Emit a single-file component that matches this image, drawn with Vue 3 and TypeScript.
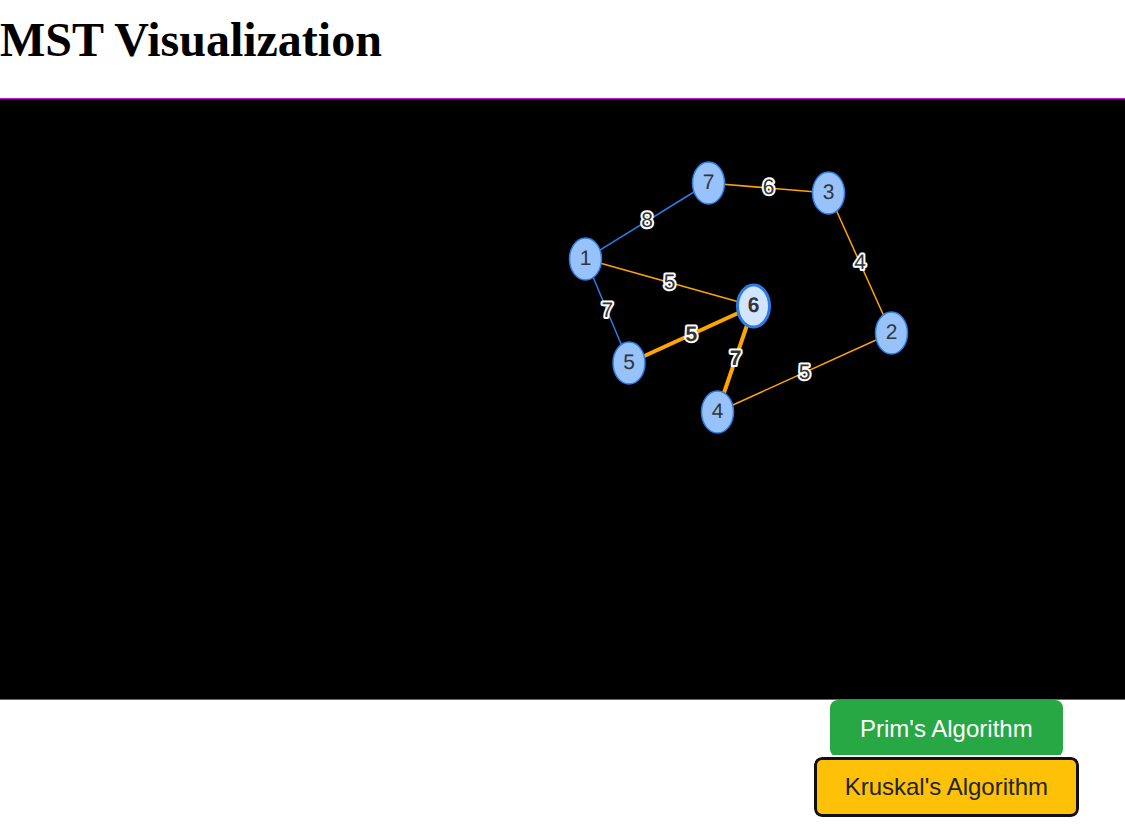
<script setup lang="ts">
import { computed, ref } from 'vue'

interface GraphNode { id: number; x: number; y: number }
interface Edge { from: number; to: number; weight: number; inTree: boolean; active?: boolean }

const nodes: GraphNode[] = [
  { id: 1, x: 585.5, y: 160 },
  { id: 2, x: 891.5, y: 234 },
  { id: 3, x: 828.5, y: 94 },
  { id: 4, x: 717.5, y: 313 },
  { id: 5, x: 629, y: 264 },
  { id: 6, x: 753.5, y: 207 },
  { id: 7, x: 708.5, y: 84 },
]

const edges: Edge[] = [
  { from: 1, to: 7, weight: 8, inTree: false },
  { from: 7, to: 3, weight: 6, inTree: true },
  { from: 3, to: 2, weight: 4, inTree: true },
  { from: 1, to: 6, weight: 5, inTree: true },
  { from: 1, to: 5, weight: 7, inTree: false },
  { from: 5, to: 6, weight: 5, inTree: true, active: true },
  { from: 6, to: 4, weight: 7, inTree: true, active: true },
  { from: 4, to: 2, weight: 5, inTree: true },
]

const selected = ref(6)

const lines = computed(() =>
  edges.map((edge) => {
    const a = nodes.find((n) => n.id === edge.from)!
    const b = nodes.find((n) => n.id === edge.to)!
    return { ...edge, a, b, mx: (a.x + b.x) / 2, my: (a.y + b.y) / 2 }
  }),
)
</script>

<template>
  <main class="page">
    <h1 class="title">MST Visualization</h1>
    <div class="network">
      <svg class="canvas" role="img" aria-label="Weighted graph">
        <g v-for="l in lines" :key="`${l.from}-${l.to}`">
          <line
            class="edge"
            :class="{ tree: l.inTree, active: l.active }"
            :x1="l.a.x" :y1="l.a.y" :x2="l.b.x" :y2="l.b.y"
          />
          <text class="weight" :class="{ strong: l.active }" :x="l.mx" :y="l.my + 6">{{ l.weight }}</text>
        </g>
        <g v-for="n in nodes" :key="n.id" class="node" :class="{ selected: n.id === selected }" @click="selected = n.id">
          <ellipse :cx="n.x" :cy="n.y" rx="16" ry="21" />
          <text :x="n.x" :y="n.y + 6">{{ n.id }}</text>
        </g>
      </svg>
    </div>
    <div class="actions">
      <button type="button" class="btn prim">Prim's Algorithm</button>
      <button type="button" class="btn kruskal">Kruskal's Algorithm</button>
    </div>
  </main>
</template>

<style>
body {
  margin: 0;
  background: #fff;
}
</style>

<style scoped>
.title {
  margin: 0;
  padding: 12px 0 30px;
  font: bold 48px/56px "Liberation Serif", "Times New Roman", serif;
  color: #000;
}
.network {
  border-top: 1px solid #dc0ce6;
  border-bottom: 1px solid #d020dc;
  background: #000;
}
.canvas {
  display: block;
  width: 100%;
  height: 600px;
  font-family: "Liberation Sans", Arial, sans-serif;
  font-size: 21px;
  text-anchor: middle;
  text-rendering: geometricPrecision;
}
.edge {
  stroke: #2b7ce9;
  stroke-width: 1.5;
}
.edge.tree {
  stroke: #ffa500;
}
.edge.active {
  stroke-width: 4;
}
.weight {
  fill: #343434;
  stroke: #fff;
  stroke-width: 4;
  stroke-linejoin: round;
  paint-order: stroke;
}
.weight.strong {
  font-weight: bold;
}
.node {
  cursor: pointer;
}
.node ellipse {
  fill: #97c2fc;
  stroke: #2b7ce9;
  stroke-width: 1.5;
}
.node text {
  fill: #343434;
}
.node.selected ellipse {
  fill: #d2e5ff;
  stroke-width: 3;
}
.node.selected text {
  font-weight: bold;
}
.actions {
  display: flex;
  flex-direction: column;
  align-items: center;
  width: fit-content;
  margin-left: auto;
  padding-right: 46px;
}
.btn {
  box-sizing: border-box;
  border: 0;
  border-radius: 8px;
  font: 24px/30px "Liberation Sans", Arial, sans-serif;
  cursor: pointer;
}
.prim {
  padding: 14px 30px 13px;
  background: #28a745;
  color: #fff;
}
.kruskal {
  padding: 12px 28px;
  border: 3px solid #101010;
  outline: 2px solid #fff;
  background: #ffc107;
  color: #212529;
}
</style>
